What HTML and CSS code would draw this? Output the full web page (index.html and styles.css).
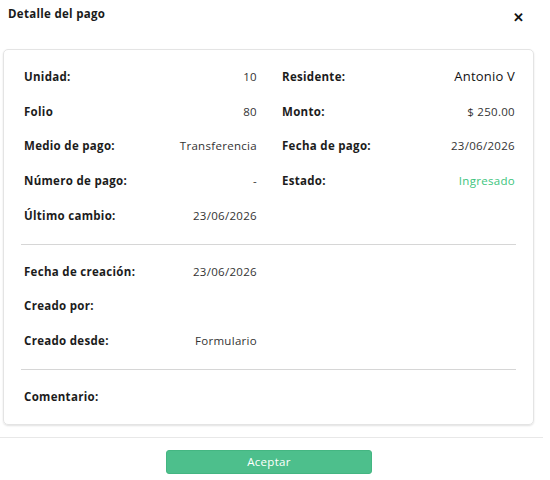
FILE: index.html
```html
<!DOCTYPE html>
<html>
<head lang="es">
    <meta charset="UTF-8">
    <title>Detalle del pago</title>
    <link rel="stylesheet" href="styles.css">
</head>
<body>
<div class="modal">
    <div class="modal-header">
        <h4 class="modal-title">Detalle del pago</h4>
        <span class="close">&#x2715;</span>
    </div>

    <div class="detail-card">
        <div class="section grid">
            <div class="row"><span class="label">Unidad:</span><span class="value">10</span></div>
            <div class="row"><span class="label">Residente:</span><span class="value big">Antonio V</span></div>
            <div class="row"><span class="label">Folio</span><span class="value">80</span></div>
            <div class="row"><span class="label">Monto:</span><span class="value">$ 250.00</span></div>
            <div class="row"><span class="label">Medio de pago:</span><span class="value">Transferencia</span></div>
            <div class="row"><span class="label">Fecha de pago:</span><span class="value">23/06/2026</span></div>
            <div class="row"><span class="label">Número de pago:</span><span class="value">-</span></div>
            <div class="row"><span class="label">Estado:</span><span class="value ok">Ingresado</span></div>
            <div class="row"><span class="label">Último cambio:</span><span class="value">23/06/2026</span></div>
        </div>

        <div class="section grid">
            <div class="row"><span class="label">Fecha de creación:</span><span class="value">23/06/2026</span></div>
            <div class="row"></div>
            <div class="row"><span class="label">Creado por:</span><span class="value"></span></div>
            <div class="row"></div>
            <div class="row"><span class="label">Creado desde:</span><span class="value">Formulario</span></div>
        </div>

        <div class="section last">
            <div class="row"><span class="label">Comentario:</span></div>
        </div>
    </div>

    <div class="modal-footer">
        <button class="btn-ok">Aceptar</button>
    </div>
</div>
</body>
</html>
```

FILE: styles.css
```css
* {
    padding: 0;
    margin: 0;
    box-sizing: border-box;
}

body {
    font-family: "Open Sans", "Liberation Sans", sans-serif;
    font-size: 11.5px;
    letter-spacing: 0.3px;
    color: #222;
    background: #fff;
}

.modal {
    width: 543px;
}

.modal-header {
    display: flex;
    justify-content: space-between;
    align-items: center;
    height: 49px;
    padding: 0 19px 22px 8px;
}

.modal-title {
    font-size: 11.5px;
    font-weight: 700;
    color: #1a1a1a;
}

.close {
    font-size: 13px;
    font-weight: 700;
    color: #111;
    margin-top: 6px;
}

.detail-card {
    margin: 0 9px 0 3px;
    border: 1px solid #e4e4e4;
    border-radius: 5px;
    box-shadow: 0 1px 2px rgba(0, 0, 0, 0.12);
    padding: 0 17px;
}

.section {
    padding: 9px 0 11px;
    border-bottom: 1px solid #d6d6d6;
}

.section.last {
    padding-bottom: 10px;
    border-bottom: none;
}

.grid {
    display: grid;
    grid-template-columns: 236px 236px;
    column-gap: 22px;
}

.row {
    display: flex;
    justify-content: space-between;
    align-items: center;
    height: 34.75px;
    padding-left: 3px;
}

.label {
    font-weight: 700;
    color: #1c1c1c;
}

.value {
    color: #333;
}

.value.big {
    font-size: 13px;
    letter-spacing: 0.2px;
    color: #111;
}

.value.ok {
    color: #3cc47c;
}

.modal-footer {
    display: flex;
    justify-content: center;
    margin-top: 12px;
    padding: 12px 5px 0 0;
    border-top: 1px solid #e8e8e8;
}

.btn-ok {
    width: 206px;
    height: 24px;
    border: 1px solid #44b682;
    border-radius: 3px;
    background: #4dbf8c;
    color: #fff;
    font-family: inherit;
    font-size: 11.5px;
    letter-spacing: 0.3px;
}
```
